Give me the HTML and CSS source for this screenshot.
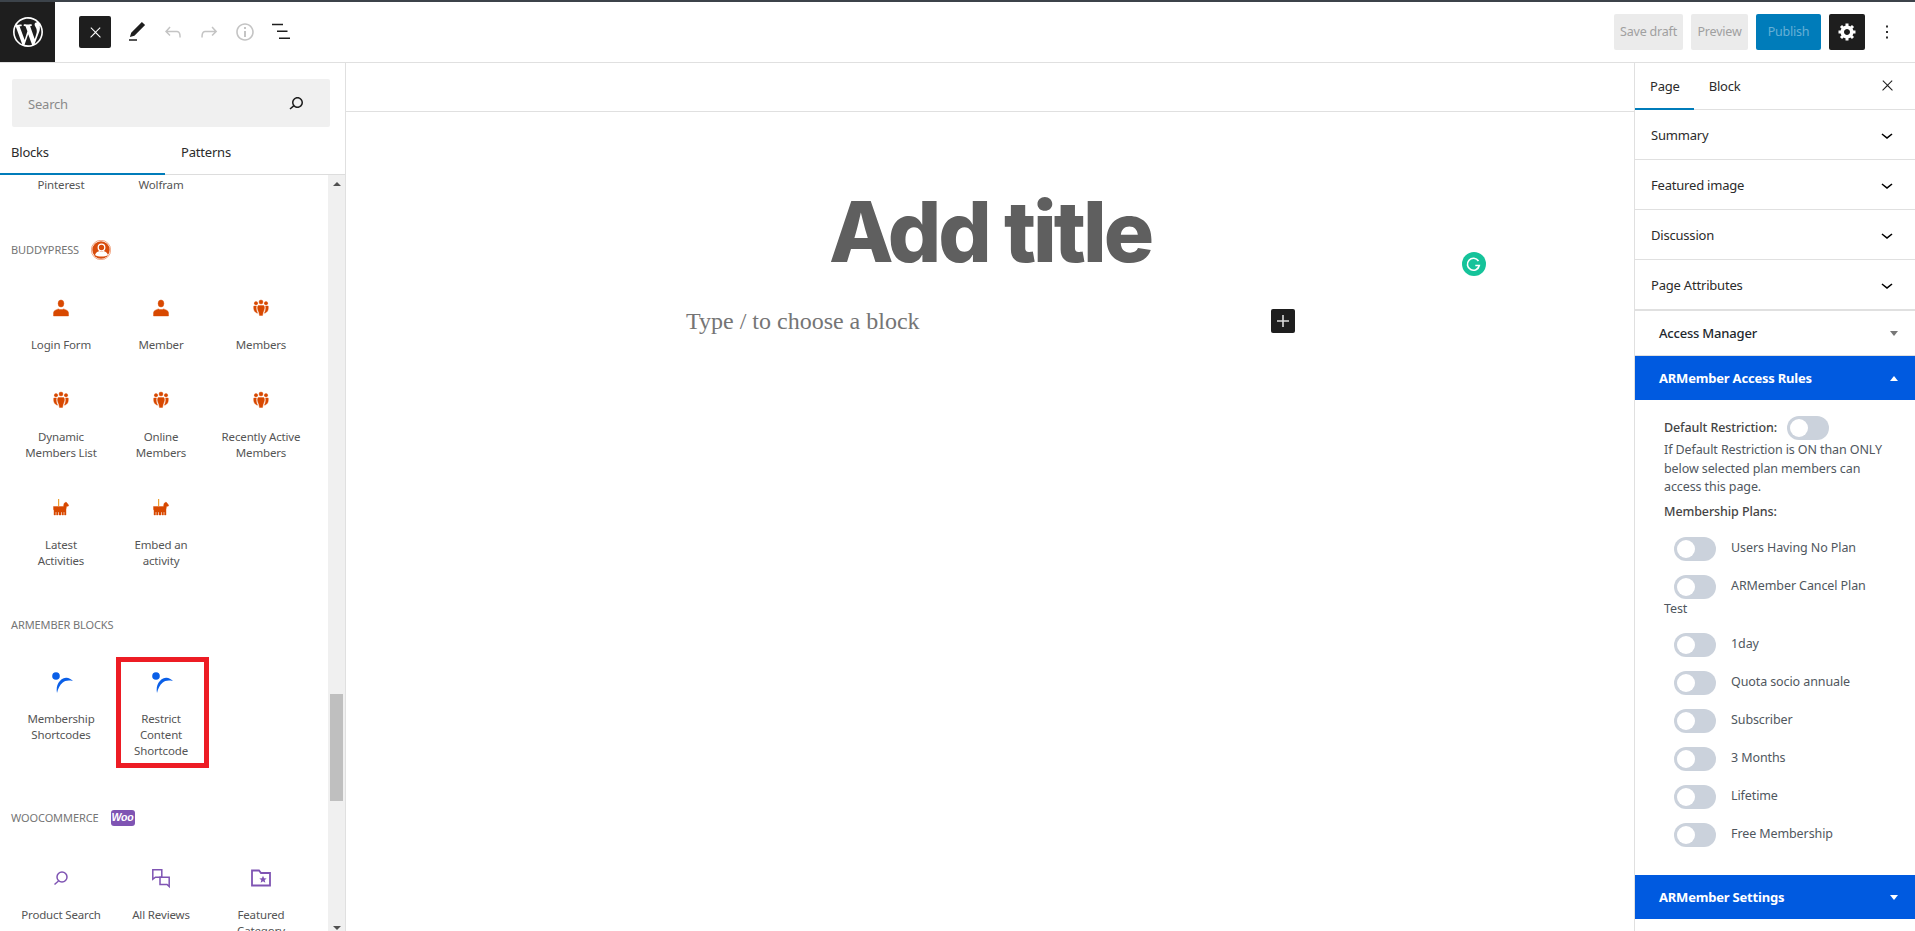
FILE: index.html
```html
<!DOCTYPE html>
<html>
<head>
  <title>Add New Page</title>
  <link rel="stylesheet" href="styles.css">
</head>
<body>
  <svg class="sprites" width="0" height="0">
    <symbol id="i-close" viewBox="0 0 24 24"><path d="M13 11.8l6.1-6.3-1-1-6.1 6.2-6.1-6.2-1 1 6.1 6.3-6.5 6.7 1 1 6.5-6.6 6.5 6.6 1-1z"/></symbol>
    <symbol id="i-chevron" viewBox="0 0 24 24"><path d="M17.5 11.6L12 16l-5.5-4.4.9-1.2L12 14l4.5-3.6 1 1.2z"/></symbol>
    <symbol id="i-person" viewBox="0 0 24 24"><ellipse cx="12" cy="7.5" rx="2.9" ry="3.6"/><path d="M4.5 20v-3.2c0-2 2.2-3 5-3.9.9.9 4.1.9 5 0 2.8.9 5 1.9 5 3.9V20z"/></symbol>
    <symbol id="i-people" viewBox="0 0 24 24"><circle cx="12" cy="6" r="2"/><circle cx="7" cy="7.2" r="1.7"/><circle cx="17" cy="7.2" r="1.7"/><path d="M9.2 9.6h5.6c1.2 1 .6 4.600-.6 6.400L13.500 19.500h-3L9.800 16c-1.200-1.800-1.800-5.400-.6-6.400z"/><path d="M4.800 10h2.600c-.6 2.400.2 5 1.200 7.200-1.600-.4-3-1.400-3.600-3.200-.4-1.400-.4-3 -.2-4z"/><path d="M19.200 10h-2.600c.6 2.400-.2 5-1.200 7.200 1.600-.4 3-1.400 3.600-3.200.4-1.400.4-3 .2-4z"/></symbol>
    <symbol id="i-horse" viewBox="0 0 24 24"><path d="M9 3h1.200v7H9z" fill="#f0a030" stroke="none"/><path d="M4.500 10.500h10l.5-3 2-1.500 1 1 1.500 2v1l-2 .5-.5 3V19h-1.500v-3h-1v3h-1.500v-3h-1v3H10v-3H9v3H7.500v-3h-1v3H5v-4.500l-.5-1z"/></symbol>
    <symbol id="i-armember" viewBox="0 0 24 24"><circle cx="7" cy="6" r="3.800"/><path d="M8 23C6.500 15.500 10.500 8.500 17 7.800c2.500-.2 5 1.200 7 3.200-5-1-8-.3-10.500 1.700C11 14.700 9 18.500 8 23z"/></symbol>
  </svg>

  <div class="topbar">
    <div class="logo">
      <svg viewBox="0 0 20 20" width="30" height="30"><path fill="#fff" d="M20 10c0-5.510-4.490-10-10-10C4.480 0 0 4.490 0 10c0 5.520 4.480 10 10 10 5.510 0 10-4.480 10-10zM7.780 15.370L4.370 6.220c.550-.020 1.170-.080 1.170-.080.500-.060.440-1.130-.060-1.110 0 0-1.450.110-2.370.110-.180 0-.370 0-.580-.010C4.120 2.690 6.870 1.110 10 1.110c2.330 0 4.450.870 6.050 2.340-.680-.110-1.650.390-1.650 1.580 0 .740.450 1.360.900 2.100.350.610.550 1.360.550 2.460 0 1.490-1.400 5-1.400 5l-3.030-8.370c.540-.020.820-.170.820-.170.500-.050.440-1.250-.060-1.220 0 0-1.440.120-2.380.120-.870 0-2.330-.120-2.330-.120-.500-.030-.560 1.200-.060 1.220l.920.080 1.260 3.410zM17.410 10c.240-.640.740-1.870.430-4.250.700 1.290 1.050 2.710 1.050 4.250 0 3.290-1.730 6.240-4.400 7.780.970-2.590 1.940-5.200 2.920-7.780zM6.100 18.090C3.120 16.650 1.110 13.530 1.110 10c0-1.300.230-2.480.720-3.590C3.250 10.300 4.670 14.200 6.100 18.090zm4.030-6.630l2.580 6.980c-.860.290-1.760.450-2.710.450-.790 0-1.570-.110-2.290-.330.810-2.380 1.620-4.740 2.420-7.100z"/></svg>
    </div>
    <div class="btn-dark close-inserter"><svg width="17" height="17" fill="#fff"><use href="#i-close"/></svg></div>
    <div class="tool"><svg viewBox="0 0 24 24" width="24" height="24" fill="#1e1e1e"><path d="M20.100 5.100L16.900 2 6.200 12.700l-1.300 4.400 4.500-1.300L20.100 5.100zM4 20.800h8v-1.500H4v1.500z"/></svg></div>
    <div class="tool"><svg viewBox="0 0 24 24" width="24" height="24" fill="#c4c4c4"><path d="M18.300 11.700c-.6-.6-1.400-.9-2.300-.9H6.700l2.900-3.300-1.100-1-4.500 5L8.500 16l1-1-2.700-2.700H16c.5 0 .9.2 1.300.5 1 1 1 3.400 1 4.500v.3h1.500v-.2c0-1.500 0-4.300-1.500-5.700z"/></svg></div>
    <div class="tool"><svg viewBox="0 0 24 24" width="24" height="24" fill="#c4c4c4"><path d="M15.600 6.500l-1.100 1 2.900 3.300H8c-.9 0-1.700.3-2.300.9-1.400 1.500-1.400 4.200-1.400 5.600v.2h1.500v-.3c0-1.100 0-3.500 1-4.500.3-.3.7-.5 1.300-.5h9.200L14.500 15l1.100 1.100 4.600-4.600-4.600-5z"/></svg></div>
    <div class="tool"><svg viewBox="0 0 24 24" width="24" height="24" fill="#c4c4c4"><path d="M12 3.200c-4.800 0-8.800 3.900-8.800 8.800 0 4.800 3.900 8.800 8.800 8.800 4.800 0 8.800-3.900 8.800-8.800 0-4.800-4-8.800-8.800-8.800zm0 16c-4 0-7.200-3.300-7.200-7.200C4.800 8 8 4.800 12 4.800s7.200 3.300 7.200 7.200c0 4-3.200 7.200-7.200 7.200zM11 17h2v-6h-2v6zm0-8h2V7h-2v2z"/></svg></div>
    <div class="tool"><svg viewBox="0 0 24 24" width="24" height="24" fill="#1e1e1e"><path d="M3 4.300h11v1.500H3zM8 11h10.500v1.500H8zM10 18h11v1.500H10z" transform="translate(0 -.5)"/></svg></div>
    <div class="topbar-right">
      <div class="btn-light save">Save draft</div>
      <div class="btn-light preview">Preview</div>
      <div class="btn-publish">Publish</div>
      <div class="btn-dark settings">
        <svg viewBox="0 0 20 20" width="20" height="20" fill="#fff"><path d="M18 12h-2.180c-.170.700-.440 1.350-.810 1.930l1.540 1.540-2.100 2.100-1.540-1.540c-.580.360-1.230.630-1.910.790V19H8v-2.180c-.680-.160-1.330-.430-1.910-.790l-1.540 1.540-2.120-2.120 1.540-1.540c-.360-.580-.630-1.230-.790-1.910H1V9.030h2.170c.160-.700.440-1.350.800-1.940L2.430 5.550l2.100-2.100 1.540 1.540c.580-.370 1.240-.640 1.930-.810V2h3v2.180c.680.160 1.330.430 1.910.790l1.540-1.540 2.120 2.120-1.540 1.540c.360.590.640 1.240.800 1.940H18V12zm-8.500 1.500c1.660 0 3-1.340 3-3s-1.340-3-3-3-3 1.340-3 3 1.340 3 3 3z" transform="translate(.5 -.5)"/></svg>
      </div>
      <div class="more"><svg viewBox="0 0 24 24" width="24" height="24" fill="#1e1e1e"><path d="M13 19h-2v-2h2v2zm0-6h-2v-2h2v2zm0-6h-2V5h2v2z"/></svg></div>
    </div>
  </div>

  <div class="main">
    <div class="inserter">
      <div class="search">
        <span>Search</span>
        <svg viewBox="0 0 24 24" width="24" height="24" fill="#1e1e1e"><path d="M13.500 6C10.500 6 8 8.500 8 11.500c0 1.100.3 2.100.9 3l-3.400 3 1 1.100 3.400-2.900c1 .9 2.200 1.400 3.600 1.400 3 0 5.500-2.500 5.500-5.500C19 8.500 16.500 6 13.500 6zm0 9.500c-2.200 0-4-1.800-4-4s1.800-4 4-4 4 1.800 4 4-1.800 4-4 4z"/></svg>
      </div>
      <div class="inserter-tabs">
        <div class="inserter-tab active">Blocks</div>
        <div class="inserter-tab patterns">Patterns</div>
      </div>
      <div class="block-area">
        <div class="block-list">
          <div class="block-grid cut-row">
            <div class="block-name">Pinterest</div>
            <div class="block-name">Wolfram</div>
          </div>

          <div class="section">
            <div class="section-title">
              BuddyPress
              <svg class="bp-logo" viewBox="0 0 20 20" width="20" height="20">
                <circle cx="10" cy="10" r="9.700" fill="none" stroke="#e8713a" stroke-width=".6"/>
                <circle cx="10" cy="10" r="8.700" fill="#d84c0c"/>
                <circle cx="10.500" cy="7.500" r="3.300" fill="none" stroke="#fff" stroke-width="1.300"/>
                <path d="M4 15c1-3 3-3.500 4.500-4 1 .8 3 .8 4 0 1.500.5 3.500 1 4.500 4-3 2-10 2-13 0z" fill="#fff"/>
              </svg>
            </div>
            <div class="block-grid">
              <div class="block-item bp"><svg width="24" height="24"><use href="#i-person"/></svg><div class="block-name">Login Form</div></div>
              <div class="block-item bp"><svg width="24" height="24"><use href="#i-person"/></svg><div class="block-name">Member</div></div>
              <div class="block-item bp"><svg width="24" height="24"><use href="#i-people"/></svg><div class="block-name">Members</div></div>
              <div class="block-item bp"><svg width="24" height="24"><use href="#i-people"/></svg><div class="block-name">Dynamic Members List</div></div>
              <div class="block-item bp"><svg width="24" height="24"><use href="#i-people"/></svg><div class="block-name">Online Members</div></div>
              <div class="block-item bp"><svg width="24" height="24"><use href="#i-people"/></svg><div class="block-name">Recently Active Members</div></div>
              <div class="block-item bp"><svg width="24" height="24"><use href="#i-horse"/></svg><div class="block-name">Latest<br>Activities</div></div>
              <div class="block-item bp"><svg width="24" height="24"><use href="#i-horse"/></svg><div class="block-name">Embed an activity</div></div>
            </div>
          </div>

          <div class="section">
            <div class="section-title">ARMember Blocks</div>
            <div class="block-grid">
              <div class="block-item arm"><svg width="24" height="24"><use href="#i-armember"/></svg><div class="block-name">Membership Shortcodes</div></div>
              <div class="block-item arm">
                <svg width="24" height="24"><use href="#i-armember"/></svg>
                <div class="block-name">Restrict Content Shortcode</div>
                <div class="red-box"></div>
              </div>
            </div>
          </div>

          <div class="section">
            <div class="section-title">WooCommerce <span class="woo-badge">Woo</span></div>
            <div class="block-grid">
              <div class="block-item woo">
                <svg viewBox="0 0 24 24" width="24" height="24"><circle cx="13" cy="11" r="5" fill="none" stroke="currentColor" stroke-width="1.500"/><path d="M9.500 15l-4 3.500" stroke="currentColor" stroke-width="1.500"/></svg>
                <div class="block-name">Product Search</div>
              </div>
              <div class="block-item woo">
                <svg viewBox="0 0 24 24" width="24" height="24" fill="none" stroke="currentColor" stroke-width="1.500"><path d="M3.800 3.800h9v7.400H6.500l-2.700 2z"/><path d="M11 11.200h9.200v9.300l-2.200-2H11z"/></svg>
                <div class="block-name">All Reviews</div>
              </div>
              <div class="block-item woo">
                <svg viewBox="0 0 24 24" width="24" height="24"><path d="M3 4.500h7l2 2.500h9v12.500H3z" fill="none" stroke="currentColor" stroke-width="1.800"/><path d="M14 9.800l1.100 2.400 2.600.2-2 1.700.6 2.600-2.300-1.400-2.300 1.400.6-2.600-2-1.700 2.600-.2z" fill="currentColor"/></svg>
                <div class="block-name">Featured Category</div>
              </div>
            </div>
          </div>
        </div>
        <div class="scrollbar">
          <div class="arrow-up"></div>
          <div class="thumb"></div>
          <div class="arrow-down"></div>
        </div>
      </div>
    </div>

    <div class="editor">
      <div class="editor-top"></div>
      <div class="canvas">
        <div class="post-title">Add title</div>
        <div class="post-block">
          <span class="placeholder">Type / to choose a block</span>
          <div class="add-block"><svg viewBox="0 0 24 24" width="24" height="24" fill="#ddd"><path d="M18 11.200h-5.200V6h-1.600v5.200H6v1.600h5.200V18h1.600v-5.200H18z"/></svg></div>
        </div>
      </div>
      <div class="grammarly">
        <svg viewBox="0 0 24 24" width="24" height="24"><circle cx="12" cy="12" r="12" fill="#15c39a"/><path d="M16.500 9a6 6 0 1 0 .8 4.500h-4" fill="none" stroke="#fff" stroke-width="1.600"/></svg>
      </div>
    </div>

    <div class="sidebar">
      <div class="side-tabs">
        <div class="side-tab active">Page</div>
        <div class="side-tab">Block</div>
        <svg class="side-close" width="17" height="17" fill="#1e1e1e"><use href="#i-close"/></svg>
      </div>
      <div class="panel-row">Summary <svg width="24" height="24"><use href="#i-chevron"/></svg></div>
      <div class="panel-row">Featured image <svg width="24" height="24"><use href="#i-chevron"/></svg></div>
      <div class="panel-row">Discussion <svg width="24" height="24"><use href="#i-chevron"/></svg></div>
      <div class="panel-row last">Page Attributes <svg width="24" height="24"><use href="#i-chevron"/></svg></div>

      <div class="meta-head">Access Manager <span class="caret down grey"></span></div>
      <div class="meta-head blue">ARMember Access Rules <span class="caret up"></span></div>
      <div class="meta-body">
        <div class="default-row"><span class="strong">Default Restriction:</span><span class="toggle"></span></div>
        <div class="note">If Default Restriction is ON than ONLY below selected plan members can access this page.</div>
        <div class="strong plans-label">Membership Plans:</div>
        <div class="plan"><span class="toggle"></span>Users Having No Plan</div>
        <div class="plan"><span class="toggle"></span>ARMember Cancel Plan Test</div>
        <div class="plan"><span class="toggle"></span>1day</div>
        <div class="plan"><span class="toggle"></span>Quota socio annuale</div>
        <div class="plan"><span class="toggle"></span>Subscriber</div>
        <div class="plan"><span class="toggle"></span>3 Months</div>
        <div class="plan"><span class="toggle"></span>Lifetime</div>
        <div class="plan"><span class="toggle"></span>Free Membership</div>
      </div>
      <div class="meta-head blue">ARMember Settings <span class="caret down"></span></div>
    </div>
  </div>
</body>
</html>
```

FILE: styles.css
```css
* {
  box-sizing: border-box;
}
html, body {
  height: 100%;
}
body {
  margin: 0;
  font-family: "Noto Sans", "Open Sans", sans-serif;
  font-size: 13px;
  letter-spacing: -0.2px;
  color: #1e1e1e;
  background: #fff;
  border-top: 2px solid #3c434a;
  overflow: hidden;
  display: flex;
  flex-direction: column;
}
.sprites {
  position: absolute;
}
svg {
  display: block;
}

/* top bar */
.topbar {
  height: 61px;
  flex: none;
  display: flex;
  align-items: center;
  border-bottom: 1px solid #e0e0e0;
}
.logo {
  width: 55px;
  height: 60px;
  background: #1e1e1e;
  display: flex;
  align-items: center;
  justify-content: center;
  margin-right: 24px;
}
.btn-dark {
  background: #1e1e1e;
  border-radius: 2px;
  display: flex;
  align-items: center;
  justify-content: center;
}
.close-inserter {
  width: 32px;
  height: 32px;
  margin-right: 8px;
}
.tool {
  width: 36px;
  display: flex;
  justify-content: center;
}
.topbar-right {
  margin-left: auto;
  display: flex;
  align-items: center;
  gap: 8px;
  padding-right: 17px;
}
.btn-light, .btn-publish {
  height: 36px;
  line-height: 36px;
  text-align: center;
  border-radius: 2px;
  font-size: 12.5px;
}
.btn-light {
  background: #ebebeb;
  color: #a0a0a0;
}
.save {
  width: 69px;
}
.preview {
  width: 57px;
}
.btn-publish {
  width: 65px;
  background: #007cba;
  color: #66b0d6;
}
.settings {
  width: 36px;
  height: 36px;
}
.more {
  width: 22px;
  margin-left: 3px;
  display: flex;
  justify-content: center;
}

.main {
  flex: 1;
  display: flex;
  min-height: 0;
}

/* block inserter */
.inserter {
  width: 346px;
  flex: none;
  border-right: 1px solid #e0e0e0;
  display: flex;
  flex-direction: column;
}
.search {
  margin: 16px 15px 0 12px;
  height: 48px;
  flex: none;
  background: #f0f0f0;
  border-radius: 2px;
  display: flex;
  align-items: center;
  justify-content: space-between;
  padding: 0 22px 0 16px;
  color: #8a8a8a;
}
.search span {
  padding-top: 2px;
}
.inserter-tabs {
  height: 48px;
  flex: none;
  display: flex;
  border-bottom: 1px solid #ddd;
  font-size: 13px;
}
.inserter-tab {
  width: 165px;
  line-height: 50px;
  padding-left: 11px;
  color: #2b2b2b;
}
.inserter-tab.patterns {
  padding-left: 16px;
}
.inserter-tab.active {
  height: 48px;
  border-bottom: 2px solid #007cba;
}
.block-area {
  flex: 1;
  display: flex;
  min-height: 0;
}
.block-list {
  flex: 1;
  overflow: hidden;
}
.block-grid {
  display: grid;
  grid-template-columns: repeat(3, 100px);
  padding-left: 11px;
}
.cut-row {
  padding-top: 2px;
  margin-bottom: 18px;
}
.section {
  padding-top: 29px;
}
.section-title {
  display: flex;
  align-items: center;
  gap: 12px;
  min-height: 16px;
  margin: 0 0 21px 11px;
  font-size: 11px;
  line-height: 16px;
  letter-spacing: -0.1px;
  text-transform: uppercase;
  color: #757575;
}
.bp-logo {
  margin-bottom: -1px;
}
.woo-badge {
  height: 16px;
  margin: 3px 0;
  width: 24px;
  background: #7f54b3;
  border-radius: 3px;
  color: #fff;
  font: italic bold 10.5px/15px "Liberation Sans", sans-serif;
  text-transform: none;
  text-align: center;
}
.block-item {
  position: relative;
  padding: 16px 0 19px;
  display: flex;
  flex-direction: column;
  align-items: center;
}
.block-item svg {
  margin-bottom: 17px;
}
.block-name {
  width: 82px;
  margin: 0 auto;
  text-align: center;
  font-size: 11.5px;
  letter-spacing: -0.15px;
  line-height: 16px;
  color: #555;
}
.bp {
  fill: #d84800;
  stroke: #d84800;
  stroke-width: 0.4;
}
.arm {
  fill: #0a5fe8;
}
.woo {
  color: #7f54b3;
}
.red-box {
  position: absolute;
  left: 5px;
  top: 3px;
  width: 93px;
  height: 111px;
  border: 5px solid #ed1c24;
}
.scrollbar {
  width: 17px;
  flex: none;
  background: #f0f0f0;
  display: flex;
  flex-direction: column;
  align-items: center;
  position: relative;
}
.arrow-up, .arrow-down {
  width: 0;
  height: 0;
  border-left: 4px solid transparent;
  border-right: 4px solid transparent;
}
.arrow-up {
  margin-top: 7px;
  border-bottom: 4px solid #505050;
}
.arrow-down {
  margin-top: auto;
  margin-bottom: 1px;
  border-top: 4px solid #505050;
}
.thumb {
  position: absolute;
  top: 519px;
  left: 2px;
  width: 13px;
  height: 107px;
  background: #bfbfbf;
}

/* editor */
.editor {
  flex: 1;
  position: relative;
}
.editor-top {
  height: 49px;
  border-bottom: 1px solid #e0e0e0;
}
.canvas {
  width: 620px;
  margin: 0 auto;
}
.post-title {
  margin-top: 70px;
  font-family: Inter, sans-serif;
  font-size: 84px;
  font-weight: 800;
  line-height: 100px;
  letter-spacing: -3.1px;
  text-align: center;
  color: #5f5f5f;
  white-space: nowrap;
}
.post-block {
  display: flex;
  align-items: center;
  justify-content: space-between;
  margin-top: 24px;
  padding: 0 5px 0 6px;
}
.placeholder {
  padding-top: 2px;
  font-family: "Liberation Serif", serif;
  font-size: 24px;
  letter-spacing: 0;
  color: #757575;
}
.add-block {
  width: 24px;
  height: 24px;
  background: #1e1e1e;
  border-radius: 2px;
}
.grammarly {
  position: absolute;
  left: 1116px;
  top: 189px;
}

/* settings sidebar */
.sidebar {
  width: 281px;
  flex: none;
  border-left: 1px solid #e0e0e0;
}
.side-tabs {
  height: 47px;
  display: flex;
  border-bottom: 1px solid #e0e0e0;
  position: relative;
}
.side-tab {
  padding: 0 15px;
  line-height: 47px;
  color: #2b2b2b;
}
.side-tab.active {
  height: 47px;
  padding-right: 14px;
  border-bottom: 2px solid #007cba;
}
.side-close {
  position: absolute;
  right: 19px;
  top: 14px;
}
.panel-row {
  height: 50px;
  display: flex;
  align-items: center;
  justify-content: space-between;
  padding: 0 16px;
  border-bottom: 1px solid #e0e0e0;
  color: #2b2b2b;
}
.panel-row.last {
  border-bottom-width: 2px;
  height: 51px;
}
.meta-head {
  height: 45px;
  display: flex;
  align-items: center;
  justify-content: space-between;
  padding: 0 17px 0 24px;
  font-weight: 500;
  color: #23282d;
  border-bottom: 1px solid #e0e0e0;
}
.meta-head.blue {
  height: 44px;
  background: #005ae0;
  color: #fff;
  font-weight: 700;
  border-bottom: none;
}
.caret {
  width: 0;
  height: 0;
  border-left: 4px solid transparent;
  border-right: 4px solid transparent;
}
.caret.down {
  border-top: 5px solid #fff;
}
.caret.up {
  border-bottom: 5px solid #fff;
}
.caret.grey {
  border-top-color: #777;
}
.meta-body {
  height: 475px;
  padding: 16px 24px 0 29px;
  color: #50575e;
  font-size: 12.5px;
  letter-spacing: -0.1px;
}
.strong {
  font-weight: 500;
  color: #444;
}
.default-row {
  display: flex;
  align-items: center;
  gap: 10px;
}
.default-row .strong {
  margin-top: -2px;
}
.note {
  line-height: 18.5px;
  margin-top: 1px;
}
.plans-label {
  line-height: 18px;
  margin: 6px 0 16px;
}
.toggle {
  display: inline-block;
  position: relative;
  width: 42px;
  height: 24px;
  background: #cbd2dc;
  border-radius: 12px;
  vertical-align: middle;
}
.toggle::before {
  content: "";
  position: absolute;
  left: 3px;
  top: 3px;
  width: 18px;
  height: 18px;
  background: #fff;
  border-radius: 50%;
}
.plan {
  line-height: 20px;
  margin-bottom: 14px;
}
.plan .toggle {
  margin: 0 15px 0 10px;
}
```
